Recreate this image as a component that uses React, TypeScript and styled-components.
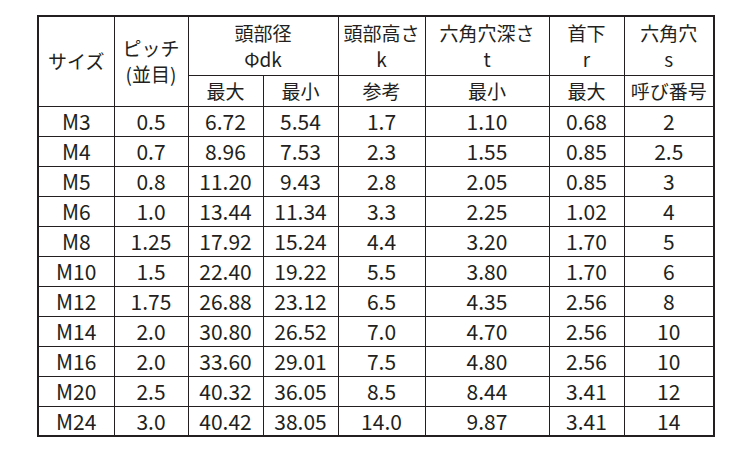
import styled, { createGlobalStyle } from 'styled-components'

const GlobalStyle = createGlobalStyle`
    html, body {
        margin: 0;
        padding: 0;
        background: #ffffff;
    }
    body {
        font-family: "Noto Sans CJK JP", "Noto Sans", sans-serif;
        color: #231f20;
    }
`

const Page = styled.div`
    width: 750px;
    height: 450px;
    padding: 15px 0 0 37px;
    box-sizing: border-box;
`

const Table = styled.table`
    border-collapse: collapse;
    table-layout: fixed;
    width: 676px;
    border: 2px solid #231f20;
`

const Cell = styled.td<{ $head?: boolean }>`
    border: 1px solid #231f20;
    padding: 0;
    text-align: center;
    vertical-align: middle;
    font-size: ${(p) => (p.$head ? '19px' : '21px')};
    line-height: ${(p) => (p.$head ? '26px' : '28px')};
    font-weight: 400;
    white-space: nowrap;
    overflow: hidden;
`

const Row = styled.tr<{ $h: number }>`
    height: ${(p) => p.$h}px;
`

const widths = [76, 74, 75, 75, 87, 124, 75, 90]

const rows = [
    ['M3', '0.5', '6.72', '5.54', '1.7', '1.10', '0.68', '2'],
    ['M4', '0.7', '8.96', '7.53', '2.3', '1.55', '0.85', '2.5'],
    ['M5', '0.8', '11.20', '9.43', '2.8', '2.05', '0.85', '3'],
    ['M6', '1.0', '13.44', '11.34', '3.3', '2.25', '1.02', '4'],
    ['M8', '1.25', '17.92', '15.24', '4.4', '3.20', '1.70', '5'],
    ['M10', '1.5', '22.40', '19.22', '5.5', '3.80', '1.70', '6'],
    ['M12', '1.75', '26.88', '23.12', '6.5', '4.35', '2.56', '8'],
    ['M14', '2.0', '30.80', '26.52', '7.0', '4.70', '2.56', '10'],
    ['M16', '2.0', '33.60', '29.01', '7.5', '4.80', '2.56', '10'],
    ['M20', '2.5', '40.32', '36.05', '8.5', '8.44', '3.41', '12'],
    ['M24', '3.0', '40.42', '38.05', '14.0', '9.87', '3.41', '14'],
]

export default function App() {
    return (
        <>
            <GlobalStyle />
            <Page>
                <Table>
                    <colgroup>
                        {widths.map((w, i) => (
                            <col key={i} style={{ width: w }} />
                        ))}
                    </colgroup>
                    <thead>
                        <Row $h={59}>
                            <Cell as="th" $head rowSpan={2}>
                                サイズ
                            </Cell>
                            <Cell as="th" $head rowSpan={2}>
                                ピッチ
                                <br />
                                (並目)
                            </Cell>
                            <Cell as="th" $head colSpan={2}>
                                頭部径
                                <br />
                                Φdk
                            </Cell>
                            <Cell as="th" $head>
                                頭部高さ
                                <br />k
                            </Cell>
                            <Cell as="th" $head>
                                六角穴深さ
                                <br />t
                            </Cell>
                            <Cell as="th" $head>
                                首下
                                <br />r
                            </Cell>
                            <Cell as="th" $head>
                                六角穴
                                <br />s
                            </Cell>
                        </Row>
                        <Row $h={31}>
                            <Cell as="th" $head>最大</Cell>
                            <Cell as="th" $head>最小</Cell>
                            <Cell as="th" $head>参考</Cell>
                            <Cell as="th" $head>最小</Cell>
                            <Cell as="th" $head>最大</Cell>
                            <Cell as="th" $head>呼び番号</Cell>
                        </Row>
                    </thead>
                    <tbody>
                        {rows.map((r) => (
                            <Row $h={30} key={r[0]}>
                                {r.map((v, i) => (
                                    <Cell key={i}>{v}</Cell>
                                ))}
                            </Row>
                        ))}
                    </tbody>
                </Table>
            </Page>
        </>
    )
}
